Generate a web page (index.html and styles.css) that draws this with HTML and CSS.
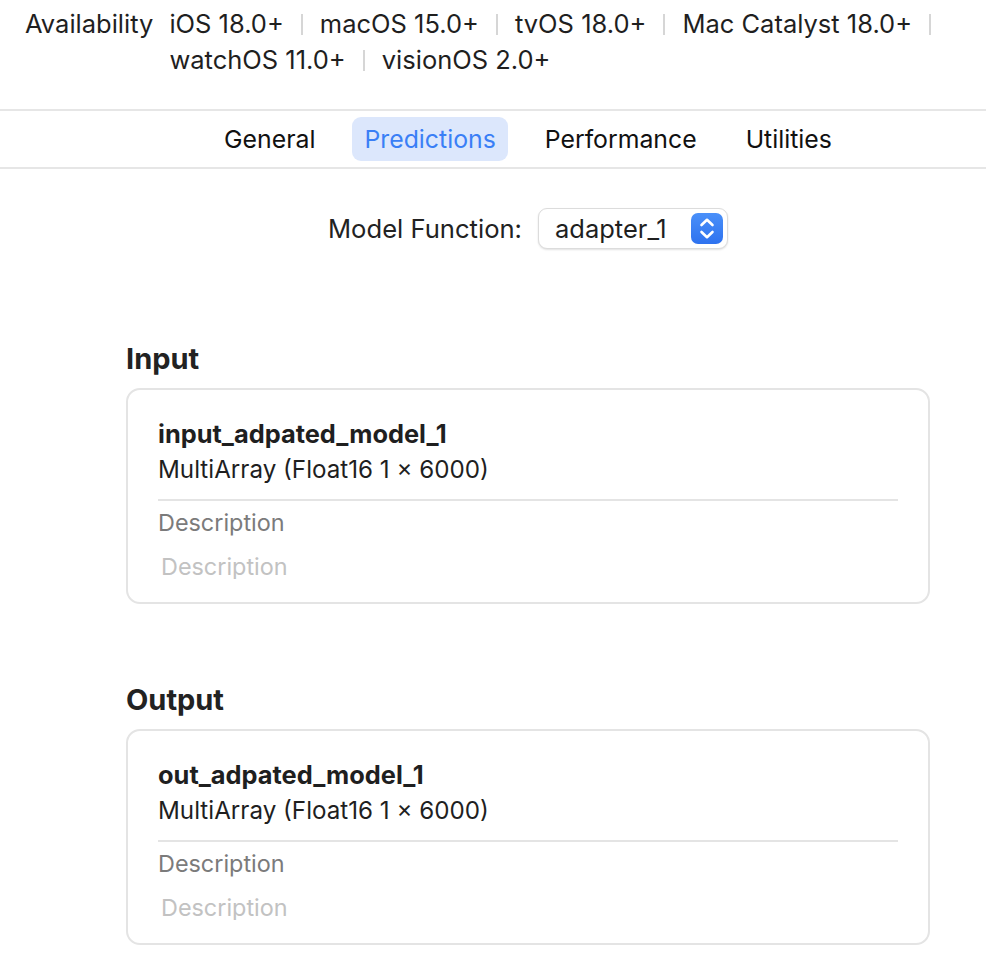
FILE: index.html
```html
<!DOCTYPE html>
<html>
<head>
<meta charset="utf-8">
<link rel="stylesheet" href="styles.css">
</head>
<body>
<div class="availability">
  <span class="avail-label">Availability</span>
  <div class="platforms">
    <span class="plat">iOS 18.0+</span><span class="sep"></span>
    <span class="plat">macOS 15.0+</span><span class="sep"></span>
    <span class="plat">tvOS 18.0+</span><span class="sep"></span>
    <span class="plat">Mac Catalyst 18.0+</span><span class="sep"></span>
    <span class="plat">watchOS 11.0+</span><span class="sep"></span>
    <span class="plat">visionOS 2.0+</span>
  </div>
</div>

<div class="tabbar">
  <div class="tabs">
    <span class="tab">General</span>
    <span class="tab active">Predictions</span>
    <span class="tab">Performance</span>
    <span class="tab">Utilities</span>
  </div>
</div>

<div class="content">
  <div class="model-row">
    <span class="model-label">Model Function:</span>
    <div class="popup">
      <span class="popup-value">adapter_1</span>
      <span class="stepper">
        <svg width="32" height="31" viewBox="0 0 32 31">
          <path d="M10.5 12 L16 6.8 L21.5 12" fill="none" stroke="#fff" stroke-width="2.6" stroke-linecap="round" stroke-linejoin="round"/>
          <path d="M10.5 19 L16 24.2 L21.5 19" fill="none" stroke="#fff" stroke-width="2.6" stroke-linecap="round" stroke-linejoin="round"/>
        </svg>
      </span>
    </div>
  </div>

  <section class="section first">
    <h2 class="section-title">Input</h2>
    <div class="card">
      <div class="feat-name">input_adpated_model_1</div>
      <div class="feat-type">MultiArray (Float16 1 × 6000)</div>
      <div class="divider"></div>
      <div class="desc-label">Description</div>
      <div class="desc-field">Description</div>
    </div>
  </section>

  <section class="section">
    <h2 class="section-title">Output</h2>
    <div class="card">
      <div class="feat-name">out_adpated_model_1</div>
      <div class="feat-type">MultiArray (Float16 1 × 6000)</div>
      <div class="divider"></div>
      <div class="desc-label">Description</div>
      <div class="desc-field">Description</div>
    </div>
  </section>
</div>
</body>
</html>
```

FILE: styles.css
```css
html, body {
  margin: 0;
  padding: 0;
  background: #ffffff;
}

body {
  font-family: Inter, "Noto Sans", sans-serif;
  color: #1f1f1f;
  font-size: 24px;
  width: 986px;
}

.availability {
  display: flex;
  align-items: flex-start;
  padding: 6px 0 0 25px;
  line-height: 36px;
  font-size: 25.5px;
  height: 111px;
  box-sizing: border-box;
  border-bottom: 2px solid #e6e6e6;
}

.avail-label {
  margin-right: 16px;
  white-space: nowrap;
}

.platforms {
  display: flex;
  flex-wrap: wrap;
  align-items: center;
  width: 800px;
}

.plat {
  white-space: nowrap;
}

.sep {
  width: 2px;
  height: 21px;
  background: #d6d6d6;
  margin: 0 17px;
}

.tabbar {
  padding: 6px 0 0 70px;
  border-bottom: 2px solid #e6e6e6;
  height: 58px;
  box-sizing: border-box;
}

.tabs {
  display: flex;
  justify-content: center;
  gap: 25px;
}

.tab {
  height: 44px;
  line-height: 45px;
  padding: 0 12px;
  border-radius: 9px;
  color: #111111;
  font-size: 24.8px;
}

.tab.active {
  background: #dce7fc;
  color: #3a7ff6;
}

.content {
  margin-left: 70px;
}

.model-row {
  display: flex;
  justify-content: center;
  align-items: center;
  margin-top: 39px;
  height: 41px;
}

.model-label {
  margin-right: 16px;
  color: #222;
  font-size: 25.6px;
}

.popup {
  display: flex;
  align-items: center;
  width: 190px;
  height: 41px;
  box-sizing: border-box;
  border: 1px solid #dcdcdc;
  border-radius: 9px;
  background: #ffffff;
  box-shadow: 0 1px 2px rgba(0, 0, 0, 0.12);
  padding: 0 4px 0 16px;
}

.popup-value {
  flex: 1;
  color: #1f1f1f;
  font-size: 25.5px;
  white-space: nowrap;
}

.stepper {
  display: block;
  width: 32px;
  height: 31px;
  border-radius: 7px;
  background: linear-gradient(#4a90f9, #2e72ef);
}

.stepper svg {
  display: block;
}

.section {
  margin: 78px 56px 0 56px;
}

.section.first {
  margin-top: 92px;
}

.section-title {
  margin: 0 0 11px 0;
  font-size: 29px;
  line-height: 36px;
  font-weight: 700;
  color: #222;
}

.card {
  border: 2px solid #e4e4e4;
  border-radius: 14px;
  padding: 26px 30px 23px 30px;
  line-height: 36px;
}

.feat-name {
  font-weight: 700;
  color: #1f1f1f;
  font-size: 25.4px;
}

.feat-type {
  color: #1f1f1f;
  font-size: 24.2px;
}

.divider {
  height: 2px;
  background: #e4e4e4;
  margin-top: 11px;
}

.desc-label {
  margin-top: 4px;
  color: #7b7b7b;
  font-size: 23.4px;
}

.desc-field {
  margin-top: 8px;
  height: 30px;
  overflow: hidden;
  padding-left: 3px;
  color: #c2c2c2;
  font-size: 23.4px;
}
```
